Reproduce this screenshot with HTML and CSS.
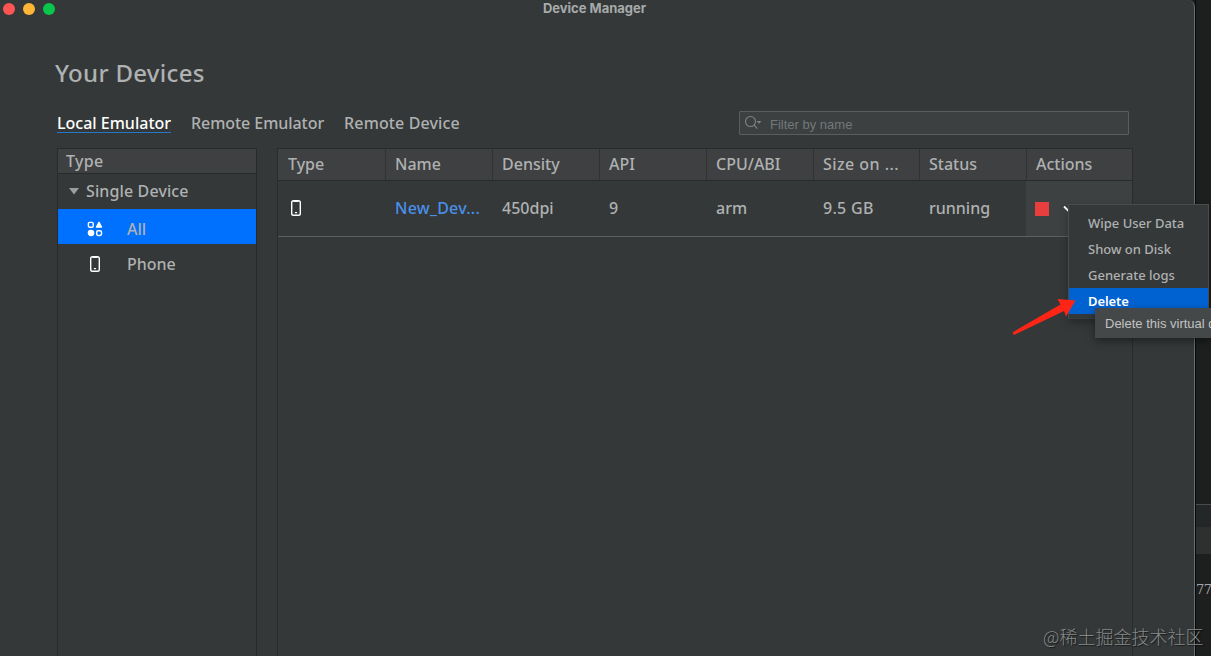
FILE: index.html
```html
<!DOCTYPE html>
<html lang="en">
<head>
<meta charset="utf-8">
<title>Device Manager</title>
<link rel="stylesheet" href="styles.css">
</head>
<body>
<svg class="symbols" width="0" height="0">
  <symbol id="phone" viewBox="0 0 12 18">
    <rect x="1.7" y="1.7" width="8.6" height="14.6" rx="1.8" fill="none" stroke="#fff" stroke-width="1.4"/>
    <path d="M3.500 2h5v1h-5zM4.900 13h2.200v1.200H4.900z" fill="#fff"/>
  </symbol>
</svg>
<div class="screen">
  <main class="window">
    <header class="titlebar">
      <div class="lights"><i class="light red"></i><i class="light yellow"></i><i class="light green"></i></div>
      <div class="title"><span>Device Manager</span></div>
    </header>
    <h1 class="heading"><span>Your Devices</span></h1>
    <div class="toolbar">
      <nav class="tabs">
        <a class="tab active">Local Emulator</a>
        <a class="tab">Remote Emulator</a>
        <a class="tab device">Remote Device</a>
      </nav>
      <div class="search">
        <svg width="19" height="16" viewBox="0 0 19 16" fill="none" stroke="#7e8385" stroke-width="1.1"><circle cx="5.500" cy="6.500" r="5"/><path d="M9.200 10.200l3 3.500"/><path d="M11.500 6h5l-2.500 2.700z" fill="#7e8385" stroke="none"/></svg>
        <span>Filter by name</span>
      </div>
    </div>
    <div class="panels">
      <aside class="sidebar">
        <div class="side-head">Type</div>
        <div class="group"><svg width="10" height="7" viewBox="0 0 10 7"><path d="M0 0h10L5 6.5z" fill="#9b9d9e"/></svg><span>Single Device</span></div>
        <div class="item selected">
          <svg width="16" height="16" viewBox="0 0 16 16" fill="none" stroke="#fff" stroke-width="1.4"><rect x="1.4" y="1.4" width="4.8" height="4.8" rx="1.2"/><path d="M12 1.400l2.500 4.600H9.500z" fill="#fff" stroke-linejoin="round"/><circle cx="4" cy="12" r="2.600" fill="#fff"/><rect x="9.700" y="9.700" width="4.800" height="4.800" rx="1.400"/></svg>
          <span>All</span>
        </div>
        <div class="item"><svg class="phone" width="12" height="18"><use href="#phone"/></svg><span>Phone</span></div>
      </aside>
      <section class="table">
        <div class="row head">
          <div class="cell">Type</div><div class="cell">Name</div><div class="cell">Density</div><div class="cell">API</div><div class="cell">CPU/ABI</div><div class="cell sizehead">Size on ...</div><div class="cell">Status</div><div class="cell">Actions</div>
        </div>
        <div class="row data">
          <div class="cell"><svg class="phone" width="12" height="18"><use href="#phone"/></svg></div><div class="cell link">New_Dev...</div><div class="cell">450dpi</div><div class="cell">9</div><div class="cell">arm</div><div class="cell size">9.5 GB</div><div class="cell">running</div>
          <div class="cell actions"><i class="stop"></i><svg width="12" height="8" viewBox="0 0 12 8"><path d="M1 1.500l5 5 5-5" fill="none" stroke="#fff" stroke-width="1.8"/></svg></div>
        </div>
      </section>
    </div>
  </main>
  <aside class="backdrop">
    <div class="strip"></div>
    <div class="digits">77</div>
  </aside>
  <div class="menu">
    <div class="option">Wipe User Data</div>
    <div class="option">Show on Disk</div>
    <div class="option">Generate logs</div>
    <div class="option chosen">Delete</div>
  </div>
  <div class="tooltip">Delete this virtual d</div>
  <svg class="arrow" width="66" height="42" viewBox="0 0 66 42"><path d="M3 38Q2.500 36.500 4 35.500L50.500 8.500L47.500 3L65.500 4.500L56 20.500L54 15L5 38.500Q3.500 39 3 38z" fill="#ff2516"/></svg>
  <div class="watermark">@稀土掘金技术社区</div>
</div>
</body>
</html>
```
FILE: styles.css
```css
* { box-sizing: border-box; }
body { margin: 0; overflow: hidden; background: #1d1e1e; color: #afb1b2; font: 500 16px/20px "Noto Sans", sans-serif; }
svg { display: block; flex: none; }
.symbols { position: absolute; }
.screen { position: relative; display: flex; width: 1211px; height: 656px; overflow: hidden; }
.window { display: flex; flex-direction: column; width: 1195px; height: 656px; background: #343838; border-right: 1px solid #696e70; border-top-right-radius: 7px; }
.titlebar { position: relative; height: 18px; }
.lights { display: flex; gap: 8px; padding: 3px; }
.light { width: 12px; height: 12px; border-radius: 50%; }
.red { background: #ff5552; }
.yellow { background: #ffb536; }
.green { background: #08c54c; }
.title { position: absolute; inset: 0 0 auto; padding-right: 5px; text-align: center; color: #a7aaab; font: bold 13px/17px Inter, sans-serif; }
.heading { margin: 38px 0 0 55px; height: 36px; font-size: 24px; line-height: 34px; font-weight: 500; letter-spacing: .3px; }
.toolbar { display: flex; justify-content: space-between; padding: 19px 65px 0 57px; height: 56px; }
.tabs { display: flex; gap: 20px; padding-top: 2px; letter-spacing: -.06px; }
.tab { height: 20px; white-space: nowrap; }
.active { color: #fff; border-bottom: 1px solid #2878c8; letter-spacing: 0; }
.device { letter-spacing: .12px; }
.search { display: flex; align-items: center; gap: 6px; width: 390px; height: 24px; padding-left: 5px; border: 1px solid #5a5e5f; border-radius: 1px; background: #3c4041; color: #737879; font: 13px/24px "Liberation Sans", sans-serif; }
.search span { padding-top: 3px; }
.panels { display: flex; gap: 20px; flex: 1; padding-left: 57px; }
.sidebar { width: 200px; border: solid #282b2b; border-width: 1px 1px 0; }
.side-head { height: 25px; padding-left: 8px; line-height: 25px; background: #3e4041; border-bottom: 1px solid #292c2c; letter-spacing: .3px; }
.group { display: flex; align-items: center; height: 35px; padding: 0 0 1px 11px; gap: 7px; letter-spacing: .12px; }
.item { display: grid; grid-template-columns: 74px 1fr; grid-template-rows: 35px; align-items: center; height: 35px; }
.item svg { justify-self: center; margin-top: 4px; }
.item span { margin-left: -5px; padding-top: 4px; }
.selected { background: #0071ff; }
.table { width: 856px; border: solid #292c2c; border-width: 1px 1px 0; }
.row { display: grid; grid-template-columns: 107px 107px 107px 107px 107px 106px 107px 106px; }
.head { height: 32px; line-height: 31px; background: #3e4041; border-bottom: 1px solid #292c2c; }
.cell { padding-left: 10px; white-space: nowrap; }
.head .cell + .cell { padding-left: 9px; border-left: 1px solid #303333; }
.head .sizehead { letter-spacing: .45px; }
.data { height: 56px; line-height: 55px; border-bottom: 1px solid #5b5f60; }
.data .phone { margin: 18px 0 0 2px; }
.link { color: #4a90ea; letter-spacing: .25px; }
.size { letter-spacing: .3px; }
.actions { display: flex; align-items: center; gap: 14px; padding-left: 9px; background: #3e4142; }
.stop { width: 14px; height: 14px; background: #e83e3d; }
.backdrop { width: 16px; padding-top: 504px; background: #1d1e1e; border-left: 1px solid #080909; }
.strip { height: 50px; border-top: 1px solid #4a4c4c; background: linear-gradient(#242727 45%, #2e3030 46%); }
.digits { padding-top: 26px; color: #a2a4a4; font: 13px/20px "DejaVu Serif", serif; letter-spacing: -.5px; }
.menu { position: absolute; left: 1068px; top: 204px; width: 141px; height: 115px; padding-top: 5px; background: #343838; border: 1px solid #484c4d; border-bottom-color: #383b40; box-shadow: 0 4px 8px #0004; font-size: 13px; }
.option { height: 26px; padding-left: 19px; line-height: 26px; }
.chosen { background: #0062d1; color: #fff; font-weight: 600; letter-spacing: -.1px; }
.tooltip { position: absolute; left: 1095px; top: 308px; width: 116px; height: 30px; padding-left: 10px; overflow: hidden; background: #454848; color: #c1c3c3; font: 13px/31px "Liberation Sans", sans-serif; white-space: nowrap; box-shadow: 0 3px 8px #0006; }
.arrow { position: absolute; left: 1010px; top: 296px; }
.watermark { position: absolute; left: 1043px; top: 623px; color: #858989; font: 300 18px/26px "Noto Sans CJK SC", sans-serif; white-space: nowrap; text-shadow: 1px 1px 1px #0008; }
```
